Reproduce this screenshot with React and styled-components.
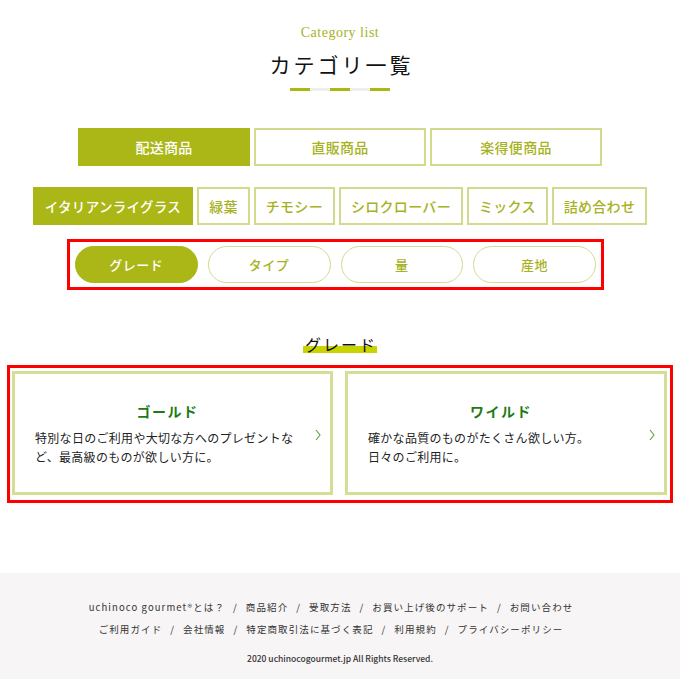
import React from "react";
import styled, { createGlobalStyle } from "styled-components";

const GlobalStyle = createGlobalStyle`
  html, body {
    margin: 0;
    padding: 0;
    background: #fff;
  }
  body {
    font-family: "Noto Sans CJK JP", "Noto Sans", sans-serif;
    color: #222;
  }
`;

const OLIVE = "#abb716";
const OLIVE_TEXT = "#a7b21f";
const LINE = "#d3da8e";

const Page = styled.div`
  width: 680px;
  display: flex;
  flex-direction: column;
  align-items: center;
`;

const Header = styled.header`
  display: flex;
  flex-direction: column;
  align-items: center;
  padding-top: 24px;
`;

const Eyebrow = styled.div`
  font-family: "Liberation Serif", "DejaVu Serif", serif;
  font-size: 14px;
  line-height: 18px;
  letter-spacing: 0.5px;
  color: ${OLIVE_TEXT};
`;

const Title = styled.h1`
  margin: 7px 0 0;
  font-family: "Noto Sans CJK JP", serif;
  font-weight: 400;
  font-size: 21px;
  line-height: 30px;
  letter-spacing: 3px;
  padding-left: 3px;
  color: #111;
`;

const Dashes = styled.div`
  display: flex;
  margin-top: 9px;
`;

const Dash = styled.span`
  width: 20px;
  height: 3px;
  background: ${(p) => (p.$on ? OLIVE : "#eeeeea")};
`;

const TabRow = styled.div`
  display: flex;
  gap: 4px;
  margin-top: ${(p) => p.$mt}px;
`;

const Tab = styled.div`
  box-sizing: border-box;
  height: 38px;
  width: ${(p) => (p.$w ? `${p.$w}px` : "auto")};
  padding: 0 10px;
  display: flex;
  align-items: center;
  justify-content: center;
  font-size: ${(p) => p.$fs || 14}px;
  font-weight: 500;
  letter-spacing: 0.3px;
  white-space: nowrap;
  border: 2px solid ${(p) => (p.$active ? OLIVE : LINE)};
  background: ${(p) => (p.$active ? OLIVE : "#fff")};
  color: ${(p) => (p.$active ? "#fff" : OLIVE_TEXT)};
`;

const Marked = styled.div`
  box-sizing: border-box;
  border: 3px solid #f00;
  margin-top: ${(p) => p.$mt}px;
  margin-right: ${(p) => p.$mr || 0}px;
  padding: ${(p) => p.$pad};
  width: ${(p) => p.$w}px;
`;

const PillRow = styled.div`
  display: flex;
  gap: 10px;
`;

const Pill = styled.div`
  box-sizing: border-box;
  width: 123px;
  height: 37px;
  border-radius: 19px;
  display: flex;
  align-items: center;
  justify-content: center;
  font-size: 13px;
  font-weight: 500;
  letter-spacing: 0.5px;
  border: 1.5px solid ${(p) => (p.$active ? OLIVE : LINE)};
  background: ${(p) => (p.$active ? OLIVE : "#fff")};
  color: ${(p) => (p.$active ? "#fff" : OLIVE_TEXT)};
`;

const SectionTitle = styled.h2`
  margin: 43px 0 0;
  font-size: 16px;
  font-weight: 400;
  line-height: 22px;
  letter-spacing: 2px;
  color: #111;
  padding: 0 0 0 2px;
  background: linear-gradient(transparent 13px, #c8d400 13px, #c8d400 20px, transparent 20px);
`;

const CardGrid = styled.div`
  display: grid;
  grid-template-columns: 321px 322px;
  gap: 12px;
`;

const Card = styled.div`
  box-sizing: border-box;
  height: 124px;
  border: 3px solid #d6dd95;
  position: relative;
  display: flex;
  flex-direction: column;
  justify-content: center;
  padding: 0 30px 0 20px;
`;

const CardTitle = styled.div`
  text-align: center;
  font-size: 14px;
  font-weight: 700;
  letter-spacing: 1.5px;
  color: #1f7a16;
  line-height: 20px;
  margin-bottom: 7px;
`;

const CardText = styled.p`
  margin: 0;
  font-size: 12px;
  line-height: 19px;
  letter-spacing: 0.3px;
  color: #222;
`;

const Chevron = styled.svg`
  position: absolute;
  right: 9px;
  top: 55px;
`;

const Footer = styled.footer`
  width: 100%;
  margin-top: 70px;
  background: #f7f5f5;
  padding: 23px 0 14px;
  display: flex;
  flex-direction: column;
  align-items: center;
`;

const LinkLine = styled.div`
  display: flex;
  margin-right: 18px;
  font-size: 9.5px;
  line-height: 22px;
  letter-spacing: 1.1px;
  color: #333;
`;

const Sep = styled.span`
  padding: 0 8px;
`;

const Copy = styled.div`
  margin-top: 11px;
  font-size: 8.5px;
  font-weight: 500;
  line-height: 14px;
  color: #333;
`;

const links1 = [
  "uchinoco gourmet®とは？",
  "商品紹介",
  "受取方法",
  "お買い上げ後のサポート",
  "お問い合わせ",
];
const links2 = [
  "ご利用ガイド",
  "会社情報",
  "特定商取引法に基づく表記",
  "利用規約",
  "プライバシーポリシー",
];

const Links = ({ items }) => (
  <LinkLine>
    {items.map((t, i) => (
      <React.Fragment key={t}>
        {i > 0 && <Sep>/</Sep>}
        <span>{t}</span>
      </React.Fragment>
    ))}
  </LinkLine>
);

const Arrow = () => (
  <Chevron width="6" height="12" viewBox="0 0 6 12">
    <polyline points="1,1 5,6 1,11" fill="none" stroke="#5aa33a" strokeWidth="1.1" />
  </Chevron>
);

const App = () => (
  <Page>
    <GlobalStyle />
    <Header>
      <Eyebrow>Category list</Eyebrow>
      <Title>カテゴリ一覧</Title>
      <Dashes>
        <Dash $on />
        <Dash />
        <Dash $on />
        <Dash />
        <Dash $on />
      </Dashes>
    </Header>

    <TabRow $mt={37}>
      <Tab $w={172} $active>配送商品</Tab>
      <Tab $w={172}>直販商品</Tab>
      <Tab $w={172}>楽得便商品</Tab>
    </TabRow>

    <TabRow $mt={21}>
      <Tab $active $fs={13.5}>イタリアンライグラス</Tab>
      <Tab>緑葉</Tab>
      <Tab>チモシー</Tab>
      <Tab>シロクローバー</Tab>
      <Tab>ミックス</Tab>
      <Tab>詰め合わせ</Tab>
    </TabRow>

    <Marked $mt={14} $mr={9} $w={537} $pad="4px 5px">
      <PillRow>
        <Pill $active>グレード</Pill>
        <Pill>タイプ</Pill>
        <Pill>量</Pill>
        <Pill>産地</Pill>
      </PillRow>
    </Marked>

    <SectionTitle>グレード</SectionTitle>

    <Marked $mt={10} $w={666} $pad="3px 3px 5px 2px">
      <CardGrid>
        <Card>
          <CardTitle>ゴールド</CardTitle>
          <CardText>
            特別な日のご利用や大切な方へのプレゼントな
            <br />
            ど、最高級のものが欲しい方に。
          </CardText>
          <Arrow />
        </Card>
        <Card>
          <CardTitle>ワイルド</CardTitle>
          <CardText>
            確かな品質のものがたくさん欲しい方。
            <br />
            日々のご利用に。
          </CardText>
          <Arrow />
        </Card>
      </CardGrid>
    </Marked>

    <Footer>
      <Links items={links1} />
      <Links items={links2} />
      <Copy>2020 uchinocogourmet.jp All Rights Reserved.</Copy>
    </Footer>
  </Page>
);

export default App;
